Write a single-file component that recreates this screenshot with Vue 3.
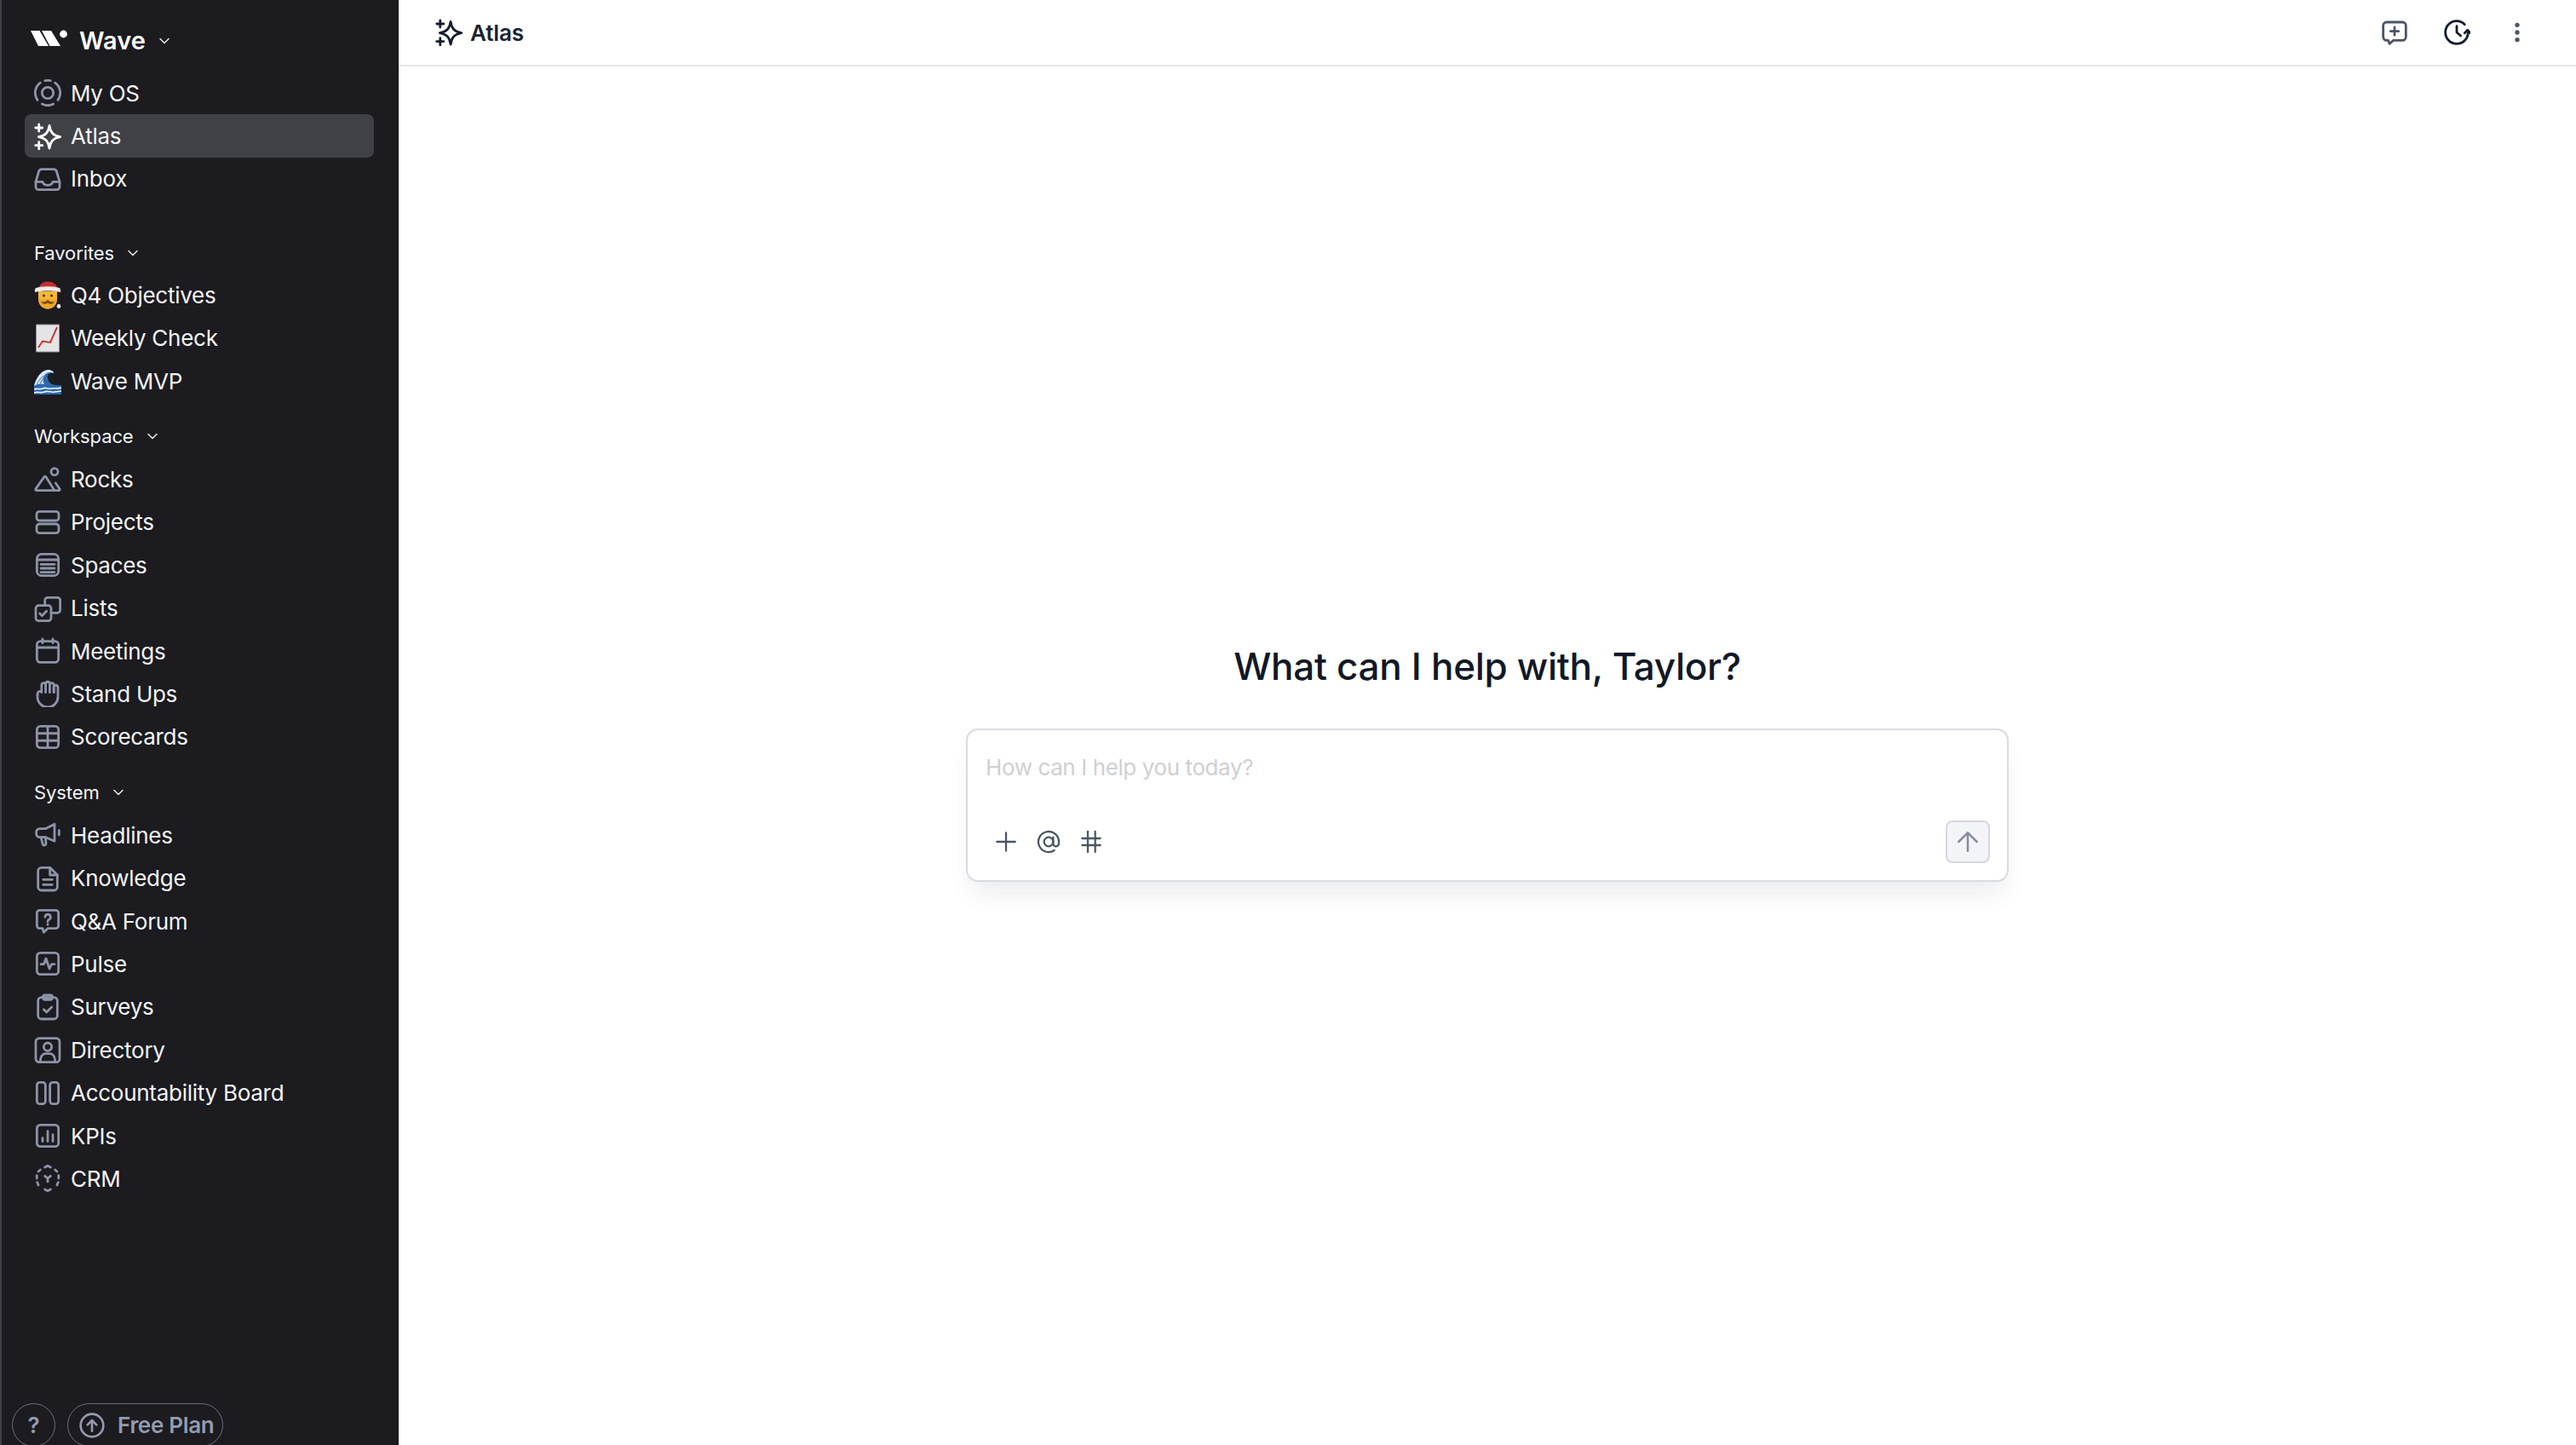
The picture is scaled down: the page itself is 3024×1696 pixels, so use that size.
<script setup>
const rect = (x, y, w, h, r) =>
  `M${x + r} ${y}h${w - 2 * r}a${r} ${r} 0 0 1 ${r} ${r}v${h - 2 * r}a${r} ${r} 0 0 1 -${r} ${r}h-${w - 2 * r}a${r} ${r} 0 0 1 -${r} -${r}v-${h - 2 * r}a${r} ${r} 0 0 1 ${r} -${r}z`;
const circle = (cx, cy, r) =>
  `M${cx - r} ${cy}a${r} ${r} 0 1 1 ${2 * r} 0a${r} ${r} 0 1 1 -${2 * r} 0z`;

const icons = {
  os: [circle(12, 12, 5), "M5.5 3.1A11 11 0 0 0 3 18.3", "M18.5 3.1A11 11 0 0 1 21 18.3", "M7 21.8A11 11 0 0 0 17 21.8", "M9.5 1.3A11 11 0 0 1 14.5 1.3"],
  sparkle: ["M13.5 2.5C14.3 8.2 16.5 11.2 23 12.5C16.5 13.8 14.3 16.8 13.5 22.5C12.7 16.8 10.5 13.8 4 12.5C10.5 11.2 12.7 8.2 13.5 2.5Z", "M4.3 1.5v6M1.3 4.5h6", "M4.3 17v6M1.3 20h6"],
  inbox: ["M1.5 14.5L4 6a3 3 0 0 1 3-2.5h10a3 3 0 0 1 3 2.5l2.5 8.5v4.5a2.5 2.5 0 0 1-2.5 2.5H4a2.5 2.5 0 0 1-2.5-2.5z", "M1.5 14.5h6c.5 2 2 3 4.5 3s4-1 4.5-3h6"],
  rocks: [circle(18, 5, 3), "M2 21.5h20a1 1 0 0 0 .5-1.5l-3.5-5", "M2 21.5a1 1 0 0 1-.5-1.5L9 9.5a1 1 0 0 1 1.5 0L18 21.5"],
  projects: [rect(2.25, 2.5, 19.5, 8, 2.5), rect(2.25, 13.5, 19.5, 8, 2.5)],
  spaces: [rect(2.5, 2.5, 19, 19, 4), "M2.5 7.5h19M6 11.5h12M6 15h12M6 18.5h12"],
  lists: [rect(1.5, 9.5, 13.5, 13.5, 2.5), "M9.5 9.5V5a2.5 2.5 0 0 1 2.5-2.5h8.5a2.5 2.5 0 0 1 2.5 2.5v8.5a2.5 2.5 0 0 1-2.5 2.5H15", "M5 16.5l2 2 4-4"],
  meetings: [rect(2.5, 3.5, 19, 18.5, 3), "M2.5 9h19", "M7.5 1.5v3.5M16.5 1.5v3.5"],
  hand: ["M3 13v2a9 9 0 0 0 18 0V6.5a1.8 1.8 0 0 0-3.6 0V11", "M17.4 11V4.5a1.8 1.8 0 0 0-3.6 0V11M13.8 11V3.5a1.8 1.8 0 0 0-3.6 0V11M10.2 11V4.5a1.8 1.8 0 0 0-3.6 0V11c-1-1.5-3.6-1.5-3.6 2"],
  table: [rect(2.5, 2.5, 19, 19, 3), "M2.5 8.8h19M2.5 15.2h19M12 2.5v19"],
  megaphone: ["M2 9.5a3 3 0 0 1 3-3h5L18 2.5v15l-8-3.5H5a3 3 0 0 1-3-3z", "M6 14l1.5 5.5a1.5 1.5 0 0 0 3 0L10 14", "M22 8v4"],
  doc: ["M14 2.5H6.5a3 3 0 0 0-3 3v14a3 3 0 0 0 3 3h11a3 3 0 0 0 3-3V9z", "M14 2.5V9h6.5", "M8 13h8M8 17.5h8"],
  question: ["M5 2.5h14a2.5 2.5 0 0 1 2.5 2.5v11a2.5 2.5 0 0 1-2.5 2.5h-7l-3.5 3.5-1-3.5H5a2.5 2.5 0 0 1-2.5-2.5V5A2.5 2.5 0 0 1 5 2.5z", "M9.7 8.5a2.4 2.4 0 1 1 3.5 2.2c-.8.4-1.2 1-1.2 1.8", "M12 15v.2"],
  pulse: [rect(2.5, 2.5, 19, 19, 3), "M6 12.5h2.5l2-5 3 9 2-4H18"],
  survey: [rect(3.5, 3.5, 17, 19, 3), rect(8, 1.5, 8, 4, 1.5), "M8.5 14l2.5 2.5 4.5-4.5"],
  directory: [rect(1.5, 2, 21, 21, 3), circle(12, 9.5, 3.5), "M5.5 22c0-4 2-6.5 4.5-6.5h4c2.5 0 4.5 2.5 4.5 6.5"],
  board: [rect(2.5, 2.5, 7.5, 19, 2.5), rect(14, 2.5, 7.5, 19, 2.5)],
  kpis: [rect(2.5, 2.5, 19, 19, 3), "M7.5 17v-3M12 17V8M16.5 17v-6"],
  crm: ["M9.5 2.3L12 1l2.5 1.3", "M9.5 21.7L12 23l2.5-1.3", "M5.5 4.5L3.8 6M2.4 9.5v2.5M2.8 15.5l1 2.5M18.5 4.5L20.2 6M21.6 9.5v2.5M21.2 15.5l-1 2.5", "M9.5 10l2.5 2 2.5-2M12 12v3"],
};

const chatPlus = ["M5 3h14a3 3 0 0 1 3 3v10a3 3 0 0 1-3 3h-8l-3.5 3-1-3H5a3 3 0 0 1-3-3V6a3 3 0 0 1 3-3z", "M12 7.5v7M8.5 11h7"];
const history = ["M19 5A10 10 0 0 0 12 2A10 10 0 1 0 22 12", "M19 12.5l2.5-2.5 2.5 2.5", "M12 6.5V12l3.5 3"];
const tools = [
  ["M12 4v16M4 12h16"],
  ["M16 12a4 4 0 1 1-8 0 4 4 0 0 1 8 0z", "M16 8v5.5a2.5 2.5 0 0 0 5 0V12a9 9 0 1 0-4 7.5"],
  ["M9 3v18M15.5 3v18M4 9h16M4 15h16"],
];

const emojis = {
  santa: [
    { d: "M5 11C6 4 11 1.5 16 1.5c6 0 11 3 12 10z", fill: "#c62f2f" },
    { d: "M5 13h22v9c0 7-5 11.5-11 11.5S5 29 5 22z", fill: "#f7b733" },
    { d: "M5 21c3 3 7 1 11 1s8 2 11-1c0 7-5 12.5-11 12.5S5 28 5 21z", fill: "#eea62c" },
    { d: "M8 25c3 1 6 0 8-2 2 2 5 3 8 2-2 3.5-6 3.5-8 1.5-2 2-6 2-8-1.5z", fill: "#7a4a10" },
    { d: circle(11.5, 18, 1.5), fill: "#4a2f10" },
    { d: circle(20.5, 18, 1.5), fill: "#4a2f10" },
    { d: "M1.5 9.5c4-3 25-3 29 0 1 2 1 3.5 0 4.5-5-2-24-2-29 0-1-1-1-2.5 0-4.5z", fill: "#f1ece8" },
    { d: circle(29, 30.5, 2.4), fill: "#f1ece8" },
  ],
  chart: [
    { d: "M2.5 1h27v32h-27z", fill: "#e4e4e7", stroke: "#8e8e95", sw: 1 },
    { d: "M5 28L10 20.5L19 22L27 4", fill: "none", stroke: "#c8362e", sw: 2 },
  ],
  wave: [
    { d: "M0 33V22C3 11 9 5 16 4c4 0 7 2 7 4-5-1-8 2-7 6 1 6 6 9 16 8v11z", fill: "#2d69ad" },
    { d: "M0 23C3 12 9 5 16 4c4 0 7 2 7 4-4-2-9-1-11 3-2 3-2 7 0 10-4-1-8-1-12 2z", fill: "#dfeaf3" },
    { d: "M3 22c2-5 5-9 9-11M7 21c1-3 2-5 4-7", fill: "none", stroke: "#5f95c9", sw: 1.2 },
    { d: "M0 27c4-2 6 1 10-1s6 1 10 0 8 1 12-1M0 31c4-2 8 1 12-1s8 1 12 0 5 0 8-1", fill: "none", stroke: "#eef3f7", sw: 1.6 },
  ],
};

const mainNav = [
  { label: "My OS", icon: "os" },
  { label: "Atlas", icon: "sparkle", active: true },
  { label: "Inbox", icon: "inbox" },
];
const favorites = [
  { label: "Q4 Objectives", emoji: "santa" },
  { label: "Weekly Check", emoji: "chart" },
  { label: "Wave MVP", emoji: "wave" },
];
const groups = [
  {
    title: "Workspace",
    items: [
      { label: "Rocks", icon: "rocks" },
      { label: "Projects", icon: "projects" },
      { label: "Spaces", icon: "spaces" },
      { label: "Lists", icon: "lists" },
      { label: "Meetings", icon: "meetings" },
      { label: "Stand Ups", icon: "hand" },
      { label: "Scorecards", icon: "table" },
    ],
  },
  {
    title: "System",
    items: [
      { label: "Headlines", icon: "megaphone" },
      { label: "Knowledge", icon: "doc" },
      { label: "Q&A Forum", icon: "question" },
      { label: "Pulse", icon: "pulse" },
      { label: "Surveys", icon: "survey" },
      { label: "Directory", icon: "directory" },
      { label: "Accountability Board", icon: "board" },
      { label: "KPIs", icon: "kpis" },
      { label: "CRM", icon: "crm" },
    ],
  },
];
</script>

<template>
  <div class="app">
    <aside class="sidebar">
      <div class="brand">
        <svg class="logo" width="43" height="20" viewBox="0 0 43 20" fill="#fff">
          <polygon points="0,1 10.5,1 21,19 9,19" />
          <polygon points="13,1 24,1 35,19 22.5,19" />
          <circle cx="38.5" cy="5" r="4.4" />
        </svg>
        <span class="brand-name">Wave</span>
        <svg class="chev chev-brand" viewBox="0 0 12 8"><path d="M1 1.5l5 5 5-5" /></svg>
      </div>

      <nav class="nav">
        <a v-for="item in mainNav" :key="item.label" class="row" :class="{ active: item.active }">
          <svg class="ico" viewBox="0 0 24 24"><path v-for="d in icons[item.icon]" :key="d" :d="d" /></svg>
          <span>{{ item.label }}</span>
        </a>
      </nav>

      <div class="label first">
        <span>Favorites</span>
        <svg class="chev" viewBox="0 0 12 8"><path d="M1 1.5l5 5 5-5" /></svg>
      </div>
      <nav class="nav">
        <a v-for="item in favorites" :key="item.label" class="row">
          <svg class="emoji" viewBox="0 0 32 34">
            <path
              v-for="s in emojis[item.emoji]"
              :key="s.d"
              :d="s.d"
              :fill="s.fill"
              :stroke="s.stroke || 'none'"
              :stroke-width="s.sw || 0"
            />
          </svg>
          <span>{{ item.label }}</span>
        </a>
      </nav>

      <template v-for="group in groups" :key="group.title">
        <div class="label">
          <span>{{ group.title }}</span>
          <svg class="chev" viewBox="0 0 12 8"><path d="M1 1.5l5 5 5-5" /></svg>
        </div>
        <nav class="nav">
          <a v-for="item in group.items" :key="item.label" class="row">
            <svg class="ico" viewBox="0 0 24 24"><path v-for="d in icons[item.icon]" :key="d" :d="d" /></svg>
            <span>{{ item.label }}</span>
          </a>
        </nav>
      </template>

      <div class="foot">
        <button class="help">?</button>
        <button class="plan">
          <svg class="plan-ico" viewBox="0 0 24 24">
            <circle cx="12" cy="12" r="10" />
            <path d="M12 17V7.5M8 11.5l4-4 4 4" />
          </svg>
          Free Plan
        </button>
      </div>
    </aside>

    <main class="main">
      <header class="topbar">
        <div class="title">
          <svg class="ico dark" viewBox="0 0 24 24"><path v-for="d in icons.sparkle" :key="d" :d="d" /></svg>
          <span>Atlas</span>
        </div>
        <div class="actions">
          <svg class="ico slate" viewBox="0 0 24 24"><path v-for="d in chatPlus" :key="d" :d="d" /></svg>
          <svg class="ico dark" viewBox="0 0 24 24"><path v-for="d in history" :key="d" :d="d" /></svg>
          <svg class="ico dots" viewBox="0 0 24 24">
            <circle cx="12" cy="5.5" r="2" />
            <circle cx="12" cy="12" r="2" />
            <circle cx="12" cy="18.5" r="2" />
          </svg>
        </div>
      </header>

      <section class="center">
        <h1>What can I help with, Taylor?</h1>
        <div class="card">
          <div class="placeholder">How can I help you today?</div>
          <div class="bar">
            <div class="tools">
              <svg v-for="(paths, i) in tools" :key="i" class="ico slate thin" viewBox="0 0 24 24">
                <path v-for="d in paths" :key="d" :d="d" />
              </svg>
            </div>
            <button class="send">
              <svg class="ico send-ico" viewBox="0 0 24 24"><path d="M12 4v16M4 12l8-8 8 8" /></svg>
            </button>
          </div>
        </div>
      </section>
    </main>
  </div>
</template>

<style scoped>
.app {
  display: flex;
  height: 1696px;
  overflow: hidden;
  font-family: Inter, "Liberation Sans", sans-serif;
  background: #fff;
}

.sidebar {
  width: 468px;
  flex: none;
  box-sizing: border-box;
  display: flex;
  flex-direction: column;
  padding: 0 29px 0 27px;
  background: #1b1b20;
  border-left: 2px solid #3f3f46;
}

.brand {
  display: flex;
  align-items: center;
  height: 84px;
  padding: 10px 0 0 7px;
  box-sizing: border-box;
}
.logo {
  flex: none;
  margin-top: -4px;
}
.brand-name {
  margin-left: 14px;
  font-size: 29px;
  font-weight: 600;
  color: #fff;
}
.chev {
  width: 12px;
  height: 8px;
  margin-left: 16px;
  fill: none;
  stroke: #e4e4e7;
  stroke-width: 1.6;
  stroke-linecap: round;
  stroke-linejoin: round;
}
.chev-brand {
  margin-top: 2px;
}

.nav {
  display: flex;
  flex-direction: column;
}
.row {
  display: flex;
  align-items: center;
  gap: 11px;
  height: 50.4px;
  box-sizing: border-box;
  padding-left: 11px;
  border-radius: 8px;
  font-size: 26px;
  letter-spacing: -0.27px;
  color: #f4f4f5;
}
.row.active {
  background: #404147;
}
.row.active .ico {
  stroke: #fff;
}

.ico {
  width: 32px;
  height: 32px;
  flex: none;
  fill: none;
  stroke: #8d94a6;
  stroke-width: 2.1;
  stroke-linecap: round;
  stroke-linejoin: round;
}
.emoji {
  width: 32px;
  height: 34px;
  flex: none;
}

.label {
  display: flex;
  align-items: center;
  height: 40px;
  margin: 20px 0 5px;
  padding-left: 11px;
  font-size: 22px;
  letter-spacing: -0.1px;
  color: #f4f4f5;
}
.label.first {
  margin: 42px 0 4px;
}

.foot {
  display: flex;
  gap: 14px;
  margin-top: auto;
  margin-bottom: -2px;
  margin-left: -15px;
}
.foot button {
  height: 51px;
  background: transparent;
  border: 1.5px solid #6b7080;
  border-radius: 26px;
  font-family: inherit;
  color: #959bae;
  font-weight: 600;
  padding: 0;
}
.help {
  width: 51px;
  font-size: 26px;
}
.plan {
  width: 183px;
  display: flex;
  align-items: center;
  gap: 14px;
  padding-left: 12px !important;
  font-size: 26px;
  letter-spacing: -0.3px;
  box-sizing: border-box;
}
.plan-ico {
  width: 32px;
  height: 32px;
  flex: none;
  fill: none;
  stroke: #959bae;
  stroke-width: 2;
  stroke-linecap: round;
  stroke-linejoin: round;
}

.main {
  flex: 1;
  display: flex;
  flex-direction: column;
  min-width: 0;
}
.topbar {
  height: 76px;
  flex: none;
  display: flex;
  align-items: center;
  justify-content: space-between;
  padding: 0 53px 0 43px;
  border-bottom: 2px solid #e5e5e5;
  box-sizing: content-box;
}
.title {
  display: flex;
  align-items: center;
  gap: 9px;
  font-size: 26px;
  font-weight: 600;
  letter-spacing: -0.1px;
  color: #1a2233;
}
.actions {
  display: flex;
  align-items: center;
  gap: 39px;
}
.actions .slate {
  margin-right: 2px;
}
.dark {
  stroke: #141b2b;
}
.slate {
  stroke: #4b5563;
}
.dots {
  fill: #4b5563;
  stroke: none;
}
.thin {
  stroke-width: 1.7;
}

.center {
  flex: 1;
  display: flex;
  flex-direction: column;
  align-items: center;
  padding-top: 668px;
}
h1 {
  margin: 0;
  height: 72px;
  line-height: 72px;
  font-size: 44px;
  font-weight: 450;
  letter-spacing: -0.3px;
  color: #111827;
}
.card {
  width: 1224px;
  height: 180px;
  margin-top: 37px;
  box-sizing: border-box;
  display: flex;
  flex-direction: column;
  border: 2px solid #d9dbe0;
  border-radius: 14px;
  padding: 27px 20px 20px 21px;
  background: #fff;
  box-shadow: 0 20px 30px -8px rgba(15, 23, 42, 0.09);
}
.placeholder {
  font-size: 26px;
  line-height: 34px;
  letter-spacing: -0.4px;
  color: #cfcfd1;
}
.bar {
  margin-top: auto;
  display: flex;
  align-items: center;
  justify-content: space-between;
}
.tools {
  display: flex;
  gap: 18px;
  padding-left: 8px;
}
.send {
  width: 52px;
  height: 50px;
  display: flex;
  align-items: center;
  justify-content: center;
  padding: 0;
  background: #f3f4f8;
  border: 2px solid #d5d7dd;
  border-radius: 8px;
}
.send-ico {
  stroke: #868ca0;
  stroke-width: 1.9;
}
</style>

<style>
html,
body {
  margin: 0;
  overflow: hidden;
}
</style>
